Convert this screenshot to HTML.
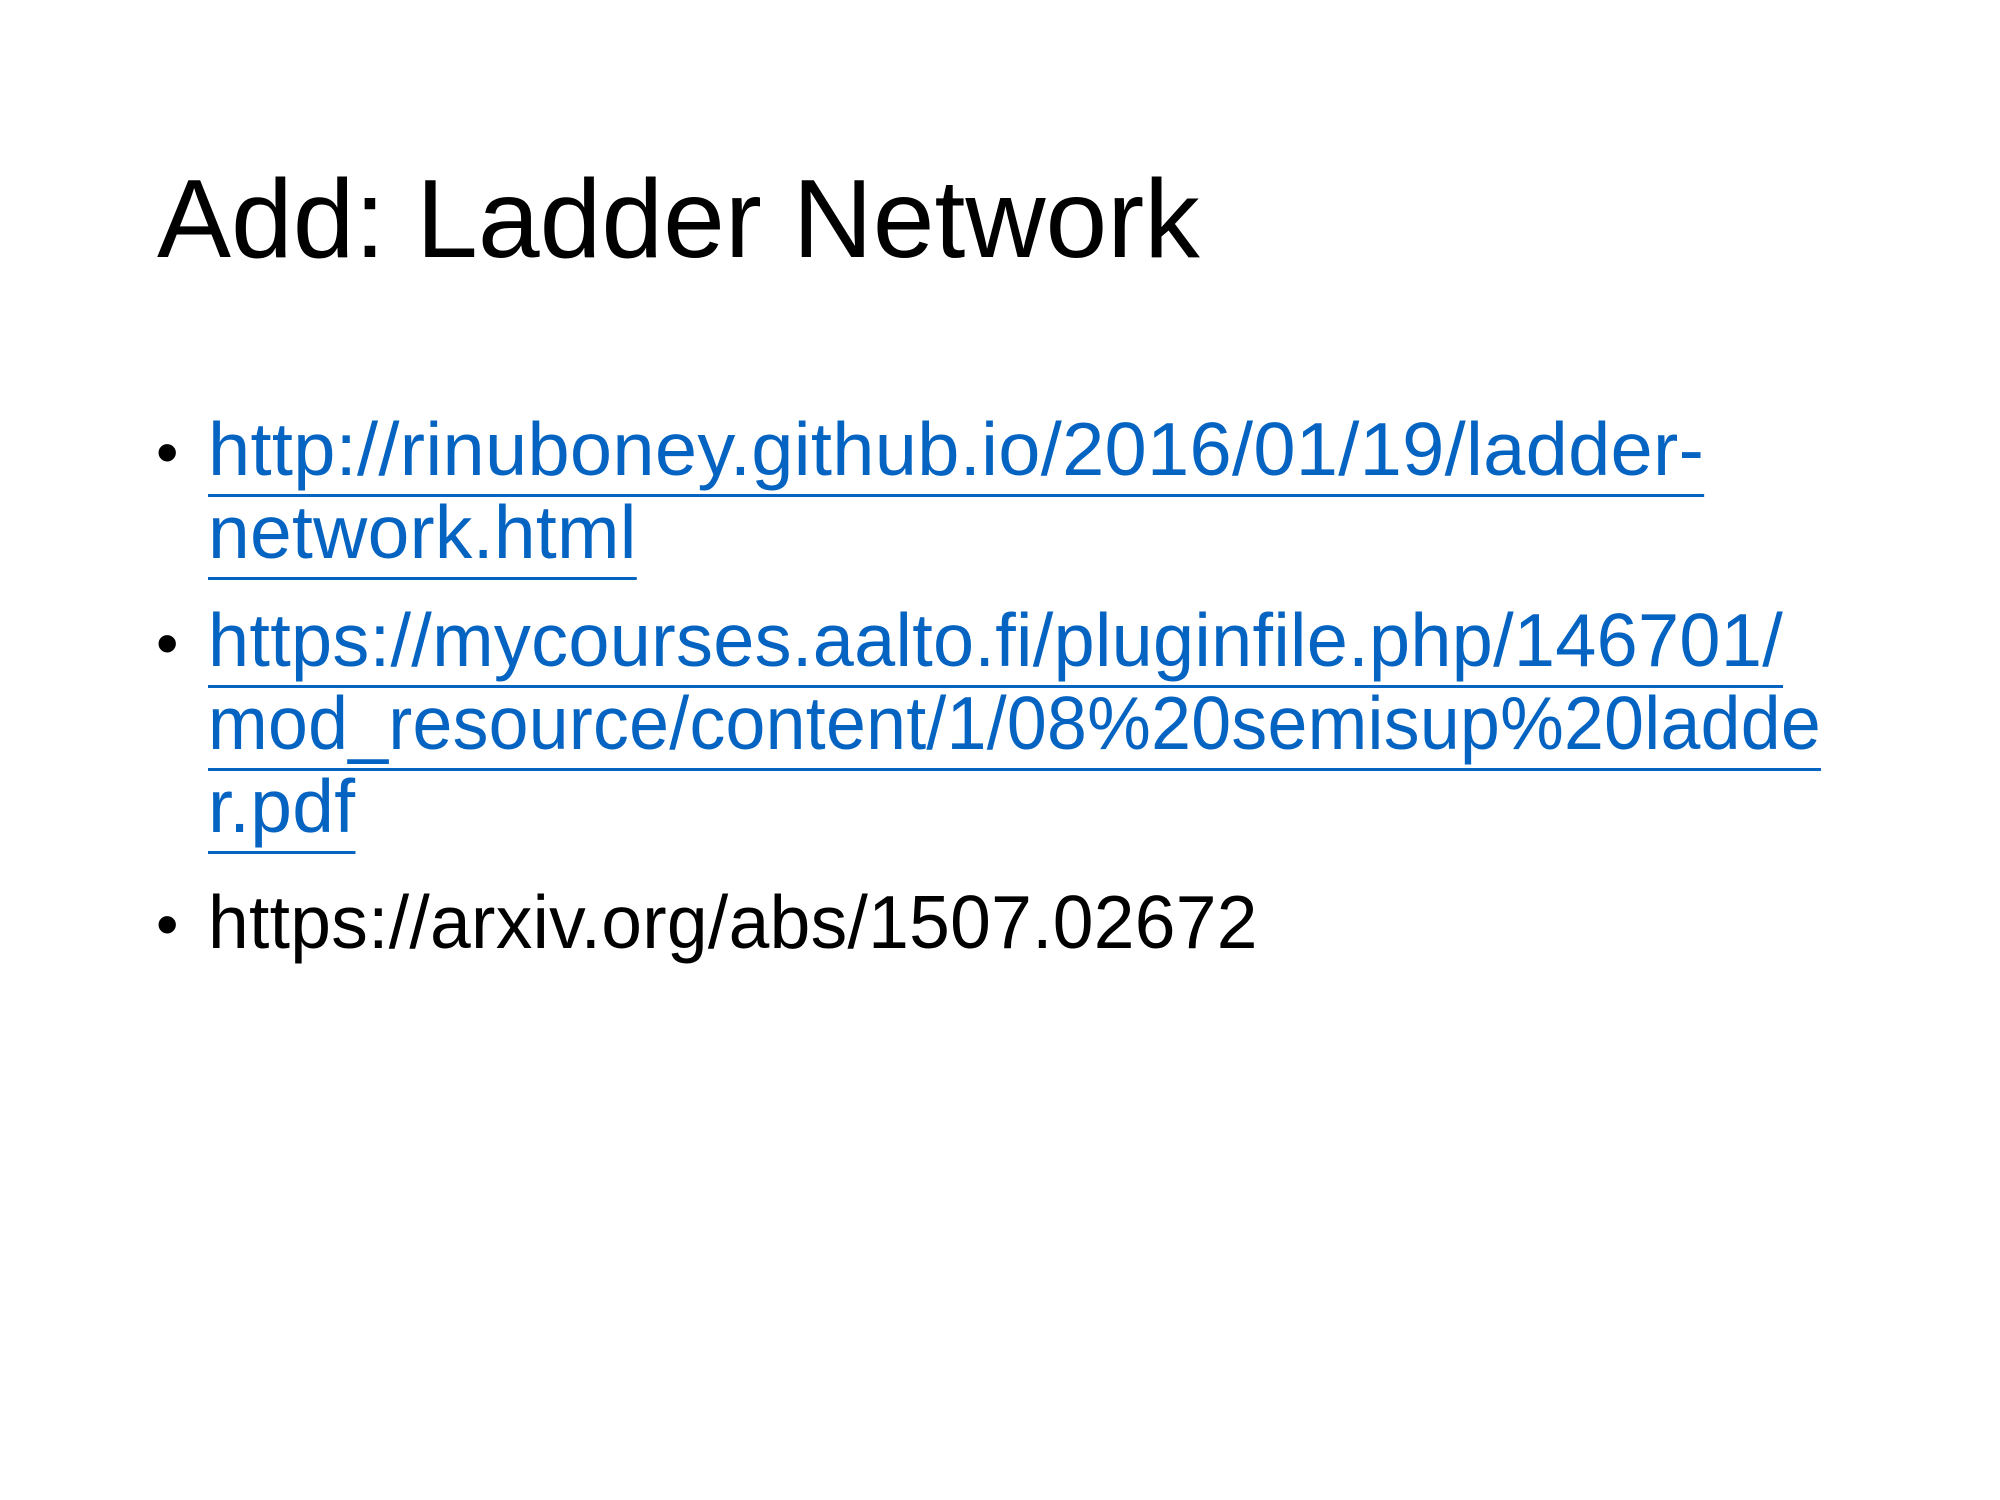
<!DOCTYPE html>
<html><head><meta charset="utf-8"><style>
html,body{margin:0;padding:0;background:#fff;}
body{width:2000px;height:1500px;position:relative;overflow:hidden;font-family:"Liberation Sans",sans-serif;}
.t{position:absolute;left:157px;top:164px;font-size:111px;line-height:1;color:#000;white-space:nowrap;}
.l{position:absolute;left:208px;font-size:75px;letter-spacing:0.3px;line-height:1;white-space:nowrap;color:#000;transform-origin:0 0;}
.a{color:#0563C1;text-decoration:underline;text-decoration-thickness:3px;text-underline-offset:19px;}
.b{position:absolute;left:156px;font-size:64px;line-height:1;}
</style></head><body>
<div class="t">Add: Ladder Network</div>
<div class="b" style="top:420px">•</div>
<div class="l a" style="top:412px;transform:scaleX(1.011)">http://rinuboney.github.io/2016/01/19/ladder-</div>
<div class="l a" style="top:495px">network.html</div>
<div class="b" style="top:611px">•</div>
<div class="l a" style="top:603px;transform:scaleX(0.985)">https://mycourses.aalto.fi/pluginfile.php/146701/</div>
<div class="l a" style="top:686px;transform:scaleX(0.955)">mod_resource/content/1/08%20semisup%20ladde</div>
<div class="l a" style="top:769px">r.pdf</div>
<div class="b" style="top:892px">•</div>
<div class="l" style="top:885px;transform:scaleX(0.976)">https://arxiv.org/abs/1507.02672</div>
</body></html>
